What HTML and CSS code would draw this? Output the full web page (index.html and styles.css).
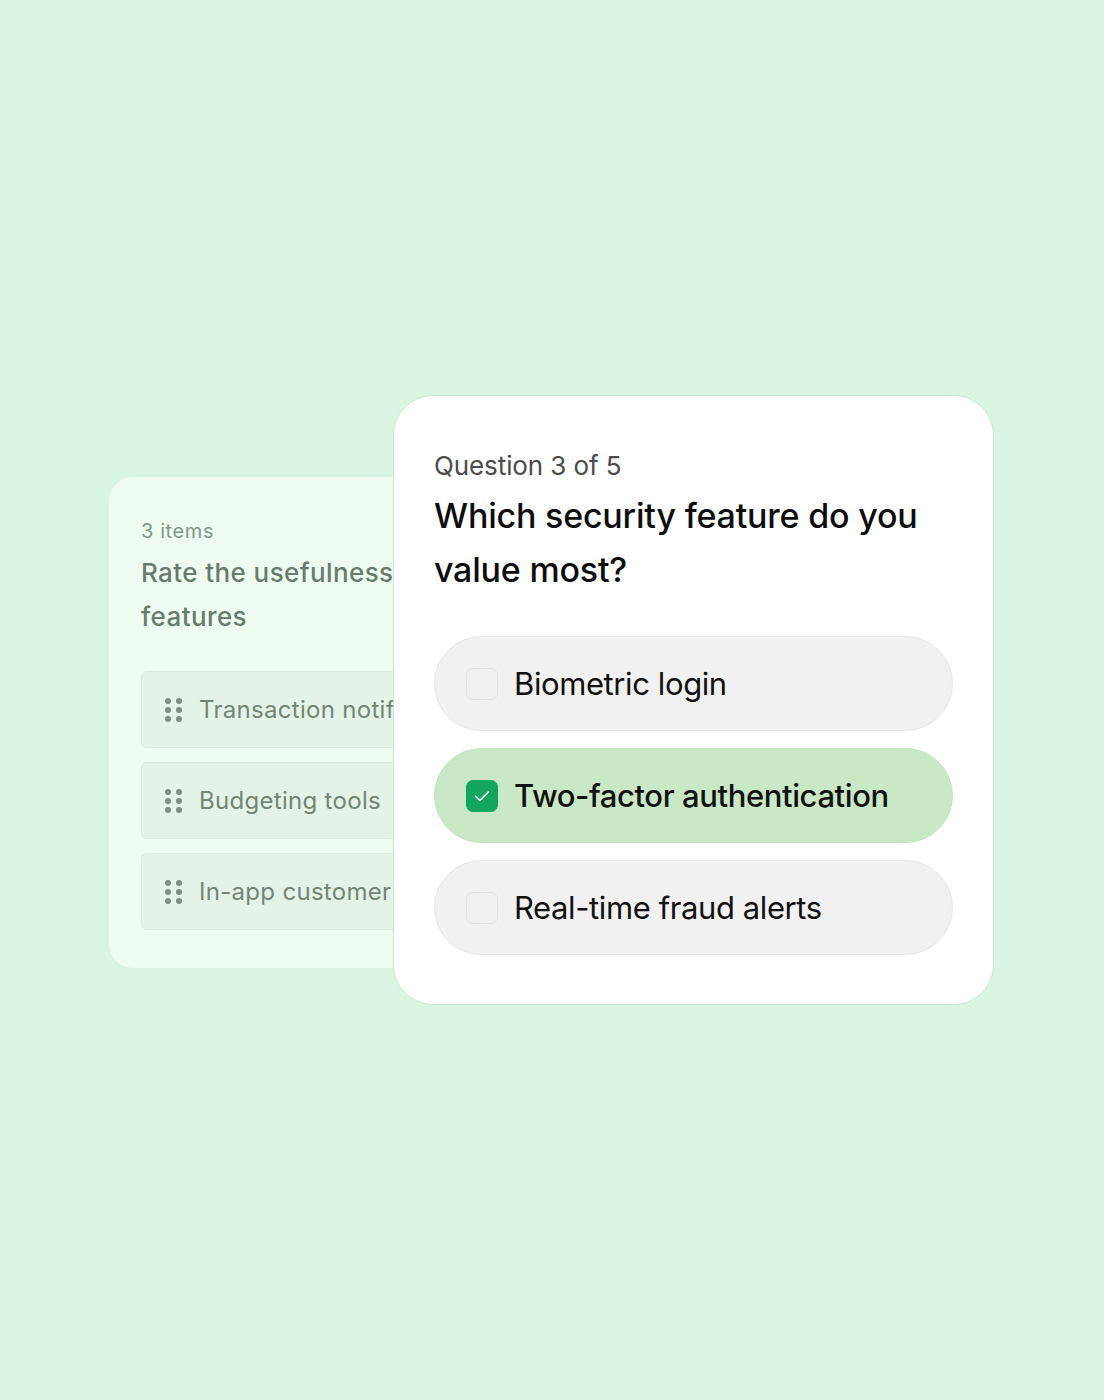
FILE: index.html
```html
<!DOCTYPE html>
<html lang="en">
<head>
    <meta charset="UTF-8">
    <meta name="viewport" content="width=device-width, initial-scale=1.0">
    <title>Survey question</title>
    <link rel="stylesheet" href="styles.css">
</head>
<body>
    <div class="stage">
        <div class="rank-card">
            <p class="rank-count">3 items</p>
            <h2 class="rank-title">Rate the usefulness of these features</h2>
            <ul class="rank-list">
                <li class="rank-item"><span class="grip"><i></i><i></i><i></i><i></i><i></i><i></i></span>Transaction notifications</li>
                <li class="rank-item"><span class="grip"><i></i><i></i><i></i><i></i><i></i><i></i></span>Budgeting tools</li>
                <li class="rank-item"><span class="grip"><i></i><i></i><i></i><i></i><i></i><i></i></span>In-app customer support</li>
            </ul>
        </div>

        <div class="question-card">
            <p class="question-step">Question 3 of 5</p>
            <h1 class="question-title">Which security feature do you value most?</h1>
            <div class="options">
                <div class="option">
                    <span class="check"></span>
                    <span class="option-label">Biometric login</span>
                </div>
                <div class="option selected">
                    <span class="check">
                        <svg width="22" height="22" viewBox="0 0 22 22" fill="none">
                            <path d="M4.5 11.2l4.4 4.3 8.6-8.8" stroke="#ffffff" stroke-width="1.5" stroke-linecap="round" stroke-linejoin="round"/>
                        </svg>
                    </span>
                    <span class="option-label">Two-factor authentication</span>
                </div>
                <div class="option">
                    <span class="check"></span>
                    <span class="option-label">Real-time fraud alerts</span>
                </div>
            </div>
        </div>
    </div>
</body>
</html>
```

FILE: styles.css
```css
body {
    margin: 0;
    height: 1400px;
    background-color: #d9f4e2;
    font-family: Inter, "Noto Sans", sans-serif;
    overflow: hidden;
}

.stage {
    display: flex;
    align-items: flex-start;
    padding: 395px 0 0 109px;
}

.rank-card {
    box-sizing: border-box;
    width: 330px;
    height: 491px;
    margin-top: 82px;
    padding: 40px 0 0 32px;
    background-color: #edfbf1;
    border-radius: 24px;
}

.rank-count {
    margin: 0;
    font-size: 20px;
    line-height: 28px;
    color: #84988a;
    letter-spacing: 0.6px;
}

.rank-title {
    margin: 6px 0 0;
    font-size: 26px;
    line-height: 44px;
    font-weight: 500;
    color: #687c6e;
    width: 440px;
    letter-spacing: 0.4px;
}

.rank-list {
    list-style: none;
    margin: 32px 0 0;
    padding: 0;
    display: flex;
    flex-direction: column;
    gap: 14px;
}

.rank-item {
    display: flex;
    align-items: center;
    gap: 17px;
    box-sizing: border-box;
    width: 340px;
    height: 77px;
    padding-left: 23px;
    background-color: #e4f3e8;
    border: 1px solid #dcebdf;
    border-radius: 6px;
    font-size: 24px;
    color: #728676;
    letter-spacing: 0.3px;
    white-space: nowrap;
}

.grip {
    display: grid;
    grid-template-columns: 6px 6px;
    gap: 3px 5px;
}

.grip i {
    width: 6px;
    height: 6px;
    border-radius: 50%;
    background-color: #7d8f81;
}

.question-card {
    position: relative;
    box-sizing: border-box;
    width: 601px;
    margin-left: -46px;
    padding: 50px 40px 49px;
    background-color: #ffffff;
    border: 1px solid #c8ead2;
    border-radius: 40px;
}

.question-step {
    margin: 0;
    font-size: 26px;
    line-height: 40px;
    color: #4b4b4b;
    letter-spacing: -0.1px;
}

.question-title {
    margin: 3px 0 0;
    font-size: 34px;
    line-height: 54px;
    font-weight: 500;
    color: #0d0d0d;
    letter-spacing: -0.2px;
}

.options {
    margin-top: 39px;
    display: flex;
    flex-direction: column;
    gap: 17px;
}

.option {
    display: flex;
    align-items: center;
    gap: 16px;
    height: 95px;
    box-sizing: border-box;
    padding-left: 31px;
    background-color: #f1f1f1;
    border: 1px solid #e7e7e7;
    border-radius: 48px;
}

.option-label {
    font-size: 31px;
    color: #111111;
    letter-spacing: -0.4px;
}

.check {
    display: flex;
    align-items: center;
    justify-content: center;
    box-sizing: border-box;
    width: 32px;
    height: 32px;
    border: 1px solid #e3e3e3;
    border-radius: 7px;
    background-color: #f1f1f1;
}

.option.selected {
    background-color: #c9e8c6;
    border-color: #c3e3c0;
}

.option.selected .option-label {
    font-weight: 500;
}

.option.selected .check {
    background-color: #12a65f;
    border-color: #12a65f;
}
```
